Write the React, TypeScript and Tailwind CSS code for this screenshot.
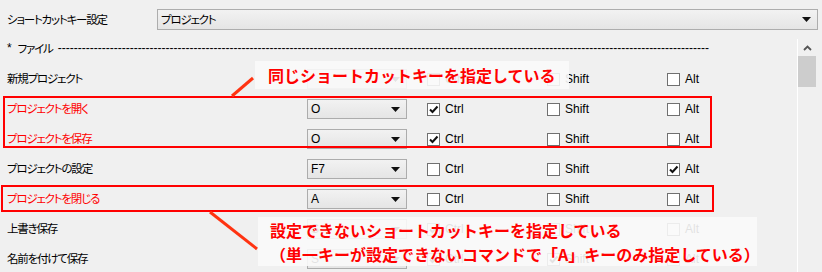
import React from 'react';

type Row = {
  label: string;
  key: string;
  ctrl?: boolean;
  shift?: boolean;
  alt?: boolean;
  error?: boolean;
};

const rows: Row[] = [
  { label: '新規プロジェクト', key: '' },
  { label: 'プロジェクトを開く', key: 'O', ctrl: true, error: true },
  { label: 'プロジェクトを保存', key: 'O', ctrl: true, error: true },
  { label: 'プロジェクトの設定', key: 'F7', alt: true },
  { label: 'プロジェクトを閉じる', key: 'A', error: true },
  { label: '上書き保存', key: 'S', ctrl: true },
  { label: '名前を付けて保存', key: 'S', ctrl: true, shift: true },
];

const jp = "font-['Noto_Sans_CJK_JP',sans-serif] [font-feature-settings:'palt'] tracking-[-1.2px] text-[11.5px]";
const latin = "font-['Liberation_Sans','Noto_Sans_CJK_JP',sans-serif]";

function Arrow() {
  return (
    <svg width="9" height="5" viewBox="0 0 9 5" className="shrink-0">
      <path d="M0 0 H9 L4.5 5 Z" fill="#111" />
    </svg>
  );
}

function Check({ checked, label }: { checked?: boolean; label: string }) {
  return (
    <div className="flex w-[120px] items-center">
      <div className="flex h-[13px] w-[13px] items-center justify-center border border-[#707070] bg-white">
        {checked && (
          <svg width="11" height="11" viewBox="0 0 11 11">
            <path d="M2 5.5 L4.5 8 L9.5 2.5" fill="none" stroke="#111" strokeWidth="2" />
          </svg>
        )}
      </div>
      <span className={`ml-[5px] text-[12px] leading-none text-black ${latin}`}>{label}</span>
    </div>
  );
}

export default function App() {
  return (
    <div className="relative h-[272px] w-[822px] overflow-hidden bg-[#f0f0f0] text-black">
      {/* header */}
      <div className="flex h-[39px] items-start pl-[7px] pt-[9px]">
        <div className={`flex h-[21px] w-[150px] items-center ${jp}`}>ショートカットキー設定</div>
        <div className="flex h-[21px] w-[661px] items-center justify-between border border-[#adadad] bg-gradient-to-b from-[#f2f2f2] to-[#e5e5e5] pl-[3px] pr-[6px]">
          <span className={jp}>プロジェクト</span>
          <Arrow />
        </div>
      </div>

      {/* list + scrollbar */}
      <div className="flex">
        <div className="w-[797px]">
          <div className="flex h-[25px] items-start whitespace-nowrap pl-[7px] leading-[18px]">
            <span className={`text-[12px] ${latin}`}>*</span>
            <span className={`ml-[6px] ${jp}`}>ファイル</span>
            <span className={`ml-[5px] text-[12px] ${latin}`}>{'-'.repeat(163)}</span>
          </div>
          {rows.map((r) => (
            <div key={r.label} className="flex h-[30px] items-center pl-[7px]">
              <div className={`w-[300px] ${jp} ${r.error ? 'text-[#ff0000]' : 'text-black'}`}>{r.label}</div>
              <div className="flex h-[20px] w-[100px] items-center justify-between border border-[#acacac] bg-gradient-to-b from-[#f2f2f2] to-[#e5e5e5] pl-[3px] pr-[6px]">
                <span className={`text-[12px] ${latin}`}>{r.key}</span>
                <Arrow />
              </div>
              <div className="ml-[20px] flex">
                <Check checked={r.ctrl} label="Ctrl" />
                <Check checked={r.shift} label="Shift" />
                <Check checked={r.alt} label="Alt" />
              </div>
            </div>
          ))}
        </div>
        <div className="h-[240px] w-[25px] border-l border-white">
          <div className="flex h-[17px] w-[18px] items-center justify-center">
            <svg width="9" height="6" viewBox="0 0 9 6">
              <path d="M1 5 L4.5 1.5 L8 5" fill="none" stroke="#555" strokeWidth="1.8" />
            </svg>
          </div>
          <div className="h-[31px] w-[18px] bg-[#cdcdcd]" />
        </div>
      </div>

      {/* red frames */}
      <div className="absolute left-[3px] top-[96px] h-[52px] w-[709px] border-2 border-[#ff0000]" />
      <div className="absolute left-[1px] top-[185px] h-[27px] w-[713px] border-2 border-[#ff0000]" />

      {/* leader lines */}
      <svg className="absolute left-0 top-0" width="822" height="272">
        <line x1="232" y1="96" x2="253" y2="78" stroke="#ff3311" strokeWidth="3" />
        <line x1="210" y1="212" x2="257" y2="249" stroke="#ff3311" strokeWidth="3" />
      </svg>

      {/* callouts */}
      <div className="absolute left-[255px] top-[61px] flex h-[28px] w-[314px] items-center bg-[#fafafa]/90 pl-[13px]">
        <span className="font-['Noto_Sans_CJK_JP',sans-serif] text-[16px] font-bold leading-none text-[#ff0000]">
          同じショートカットキーを指定している
        </span>
      </div>
      <div className="absolute left-[258px] top-[217px] flex h-[49px] w-[499px] flex-col justify-center bg-[#fafafa]/90 pl-[12px]">
        <span className="font-['Noto_Sans_CJK_JP',sans-serif] text-[16px] font-bold leading-[24px] text-[#ff0000]">
          設定できないショートカットキーを指定している
        </span>
        <span className="font-['Noto_Sans_CJK_JP',sans-serif] text-[16px] font-bold leading-[24px] text-[#ff0000]">
          （単一キーが設定できないコマンドで「A」キーのみ指定している）
        </span>
      </div>
    </div>
  );
}
